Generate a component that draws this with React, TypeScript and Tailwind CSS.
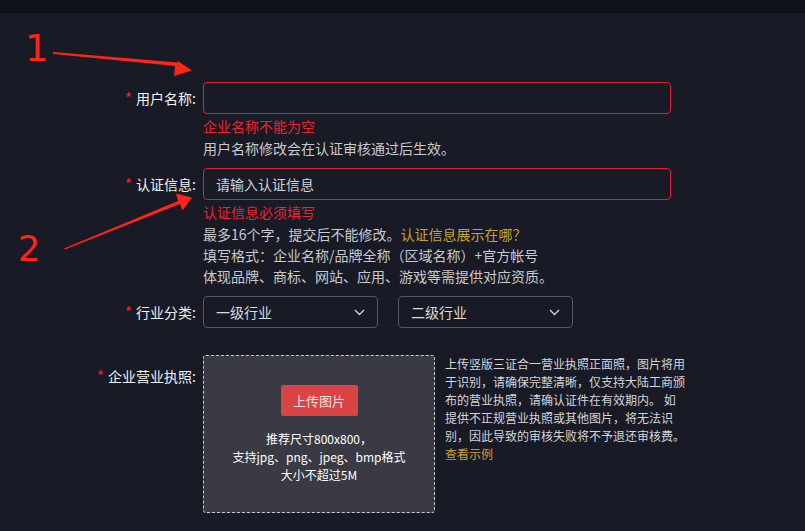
import React from "react";

const Label = ({ text, className = "" }: { text: string; className?: string }) => (
  <div className={`w-[196px] shrink-0 text-right text-[14px] text-[#f2f2f2] ${className}`}>
    <span className="text-[#f0252b] mr-[4px] text-[15px]">*</span>
    {text}:
  </div>
);

const Chevron = () => (
  <svg width="11" height="7" viewBox="0 0 11 7" fill="none">
    <path d="M1 1 L5.5 5.5 L10 1" stroke="#cfd2d8" strokeWidth="1.4" />
  </svg>
);

const Select = ({ text }: { text: string }) => (
  <div className="w-[175px] h-[32px] border border-[#565865] rounded-[4px] flex items-center justify-between pl-[12px] pr-[12px] text-[14px] text-[#dcdcdc]">
    <span>{text}</span>
    <Chevron />
  </div>
);

const descLines = [
  "上传竖版三证合一营业执照正面照，图片将用",
  "于识别，请确保完整清晰，仅支持大陆工商颁",
  "布的营业执照，请确认证件在有效期内。 如",
  "提供不正规营业执照或其他图片，将无法识",
  "别，因此导致的审核失败将不予退还审核费。",
];

export default function App() {
  return (
    <div
      className="relative w-[805px] h-[531px] overflow-hidden bg-[#181a25]"
      style={{ fontFamily: '"Noto Sans CJK SC", "Noto Sans", sans-serif' }}
    >
      <div className="h-[13px] bg-[#10111b]" />

      <div className="pt-[69px]">
        {/* Row 1 */}
        <div className="flex mb-[9px]">
          <Label text="用户名称" className="leading-[32px]" />
          <div className="ml-[7px]">
            <div className="w-[468px] h-[32px] border border-[#e3212e] rounded-[4px]" />
            <div className="mt-[1px] text-[14px] leading-[23px] text-[#ea2430]">企业名称不能为空</div>
            <div className="text-[14px] leading-[21px] text-[#c9cacd]">用户名称修改会在认证审核通过后生效。</div>
          </div>
        </div>

        {/* Row 2 */}
        <div className="flex mb-[9px]">
          <Label text="认证信息" className="leading-[32px]" />
          <div className="ml-[7px]">
            <div className="w-[468px] h-[32px] border border-[#e3212e] rounded-[4px] flex items-center pl-[12px] text-[14px] text-[#d2d3d6]">
              请输入认证信息
            </div>
            <div className="mt-[1px] text-[14px] leading-[23px] text-[#ea2430]">认证信息必须填写</div>
            <div className="text-[14px] leading-[21px] text-[#c9cacd]">
              最多16个字，提交后不能修改。<span className="text-[#c8a22c]">认证信息展示在哪？</span>
            </div>
            <div className="text-[14px] leading-[21px] text-[#c9cacd]">填写格式：企业名称/品牌全称（区域名称）+官方帐号</div>
            <div className="text-[14px] leading-[21px] text-[#c9cacd]">体现品牌、商标、网站、应用、游戏等需提供对应资质。</div>
          </div>
        </div>

        {/* Row 3 */}
        <div className="flex mb-[27px]">
          <Label text="行业分类" className="leading-[32px]" />
          <div className="ml-[7px] flex gap-[20px]">
            <Select text="一级行业" />
            <Select text="二级行业" />
          </div>
        </div>

        {/* Row 4 */}
        <div className="flex">
          <Label text="企业营业执照" className="leading-[32px] mt-[5px]" />
          <div className="ml-[7px] flex">
            <div className="w-[232px] h-[158px] border border-dashed border-[#c9cace] rounded-[3px] bg-[#393a43] flex flex-col items-center pt-[29px]">
              <div className="w-[77px] h-[31px] bg-[#d94545] rounded-[2px] flex items-center justify-center text-[13px] text-[#f6dede]">
                上传图片
              </div>
              <div className="mt-[14px] text-[12px] leading-[18px] text-white text-center">
                <div>推荐尺寸800x800，</div>
                <div>支持jpg、png、jpeg、bmp格式</div>
                <div>大小不超过5M</div>
              </div>
            </div>
            <div className="ml-[10px] text-[12px] leading-[18px] text-[#d4d5d8] whitespace-nowrap">
              {descLines.map((l) => (
                <div key={l}>{l}</div>
              ))}
              <div className="text-[#c8a22c]">查看示例</div>
            </div>
          </div>
        </div>
      </div>

      {/* Annotations */}
      <div
        className="absolute left-[25px] top-[27px] text-[37px] leading-[44px] text-[#ff2418]"
        style={{ fontFamily: '"DejaVu Sans", sans-serif' }}
      >
        1
      </div>
      <div
        className="absolute left-[18px] top-[227px] text-[35px] leading-[44px] text-[#ff2418]"
        style={{ fontFamily: '"DejaVu Sans", sans-serif' }}
      >
        2
      </div>
      <svg className="absolute left-0 top-0" width="805" height="531" viewBox="0 0 805 531">
        <polygon points="53,52 178,62.5 177,60.5 192,70.5 174,76 175,66 53,54" fill="#ff2418" />
        <polygon points="64,248.5 178,201 176,193.5 192,197.5 182.5,210.5 180,204 65,249.5" fill="#ff2418" />
      </svg>
    </div>
  );
}
